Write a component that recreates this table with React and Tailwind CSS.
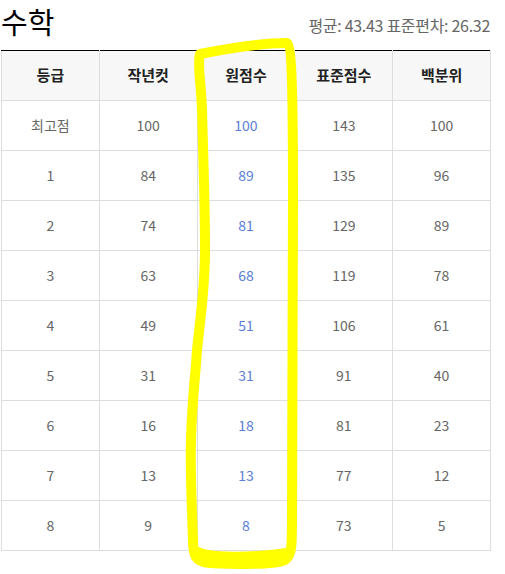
const rows = [
  ['최고점', 100, 100, 143, 100],
  [1, 84, 89, 135, 96],
  [2, 74, 81, 129, 89],
  [3, 63, 68, 119, 78],
  [4, 49, 51, 106, 61],
  [5, 31, 31, 91, 40],
  [6, 16, 18, 81, 23],
  [7, 13, 13, 77, 12],
  [8, 9, 8, 73, 5],
]

const heads = ['등급', '작년컷', '원점수', '표준점수', '백분위']

export default function App() {
  return (
    <div
      className="relative w-[505px] h-[574px] bg-white overflow-hidden"
      style={{ fontFamily: '"Noto Sans CJK KR", "Noto Sans", sans-serif' }}
    >
      {/* title */}
      <div className="flex items-start justify-between pl-[1px] pr-[15px] h-[50px] pt-[4px]">
        <h2 className="text-[29px] leading-[34px] text-black">수학</h2>
        <span className="mt-[11px] text-[16px] leading-[20px] text-[#666] tracking-[-0.3px]">평균: 43.43 표준편차: 26.32</span>
      </div>

      {/* table */}
      <table className="ml-[1px] w-[490px] border-collapse table-fixed border-t border-t-black">
        <thead>
          <tr className="h-[50px] bg-[#f7f7f7]">
            {heads.map(h => (
              <th key={h} className="border border-[#ddd] border-t-black text-[15px] font-bold text-[#222] text-center">
                {h}
              </th>
            ))}
          </tr>
        </thead>
        <tbody>
          {rows.map((r, i) => (
            <tr key={i} className="h-[50px]">
              {r.map((c, j) => (
                <td
                  key={j}
                  className={`border border-[#ddd] text-center text-[14px] ${j === 2 ? 'text-[#5b7ed6]' : 'text-[#666]'}`}
                >
                  {c}
                </td>
              ))}
            </tr>
          ))}
        </tbody>
      </table>

      {/* hand-drawn highlight */}
      <svg className="absolute left-0 top-0 pointer-events-none" width="505" height="574">
        <path
          d="M200 54 C 230 48, 262 43, 287 43 C 292 46, 293 100, 293 200 C 293 350, 292 450, 292 520 C 292 545, 292 555, 285 560 C 270 566, 230 564, 210 563 C 195 562, 193 555, 193 540 C 192 510, 190 470, 191 440 C 192 400, 196 370, 197 350 C 200 320, 205 290, 205 250 C 205 200, 203 150, 202 110 C 201 80, 197 65, 200 54 Z"
          fill="none"
          stroke="#ffff00"
          strokeWidth="10"
          strokeLinejoin="round"
        />
        <path
          d="M198 552 C 210 558, 250 558, 287 553"
          fill="none"
          stroke="#ffff00"
          strokeWidth="10"
          strokeLinecap="round"
        />
      </svg>
    </div>
  )
}
